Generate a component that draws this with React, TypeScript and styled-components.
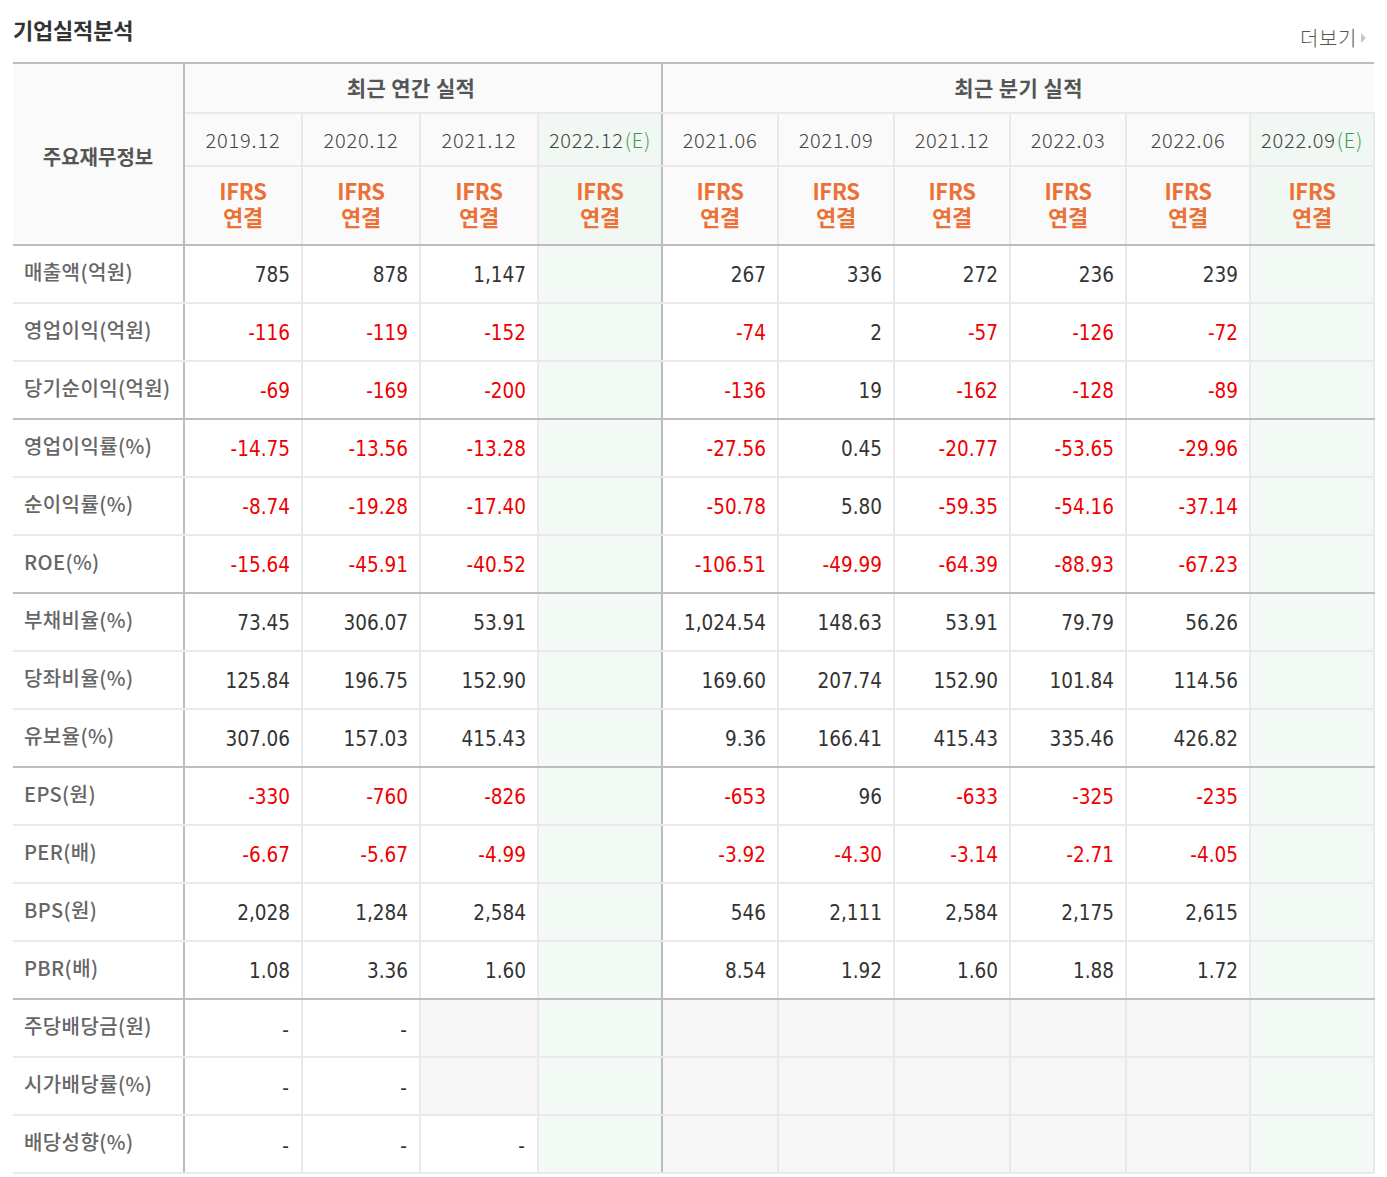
import React from 'react';
import styled, { createGlobalStyle } from 'styled-components';

const GlobalStyle = createGlobalStyle`
	html, body {
		margin: 0;
		padding: 0;
		background: #fff;
	}
	body {
		font-family: 'Noto Sans CJK KR', 'Noto Sans', sans-serif;
	}
`;

const LINE = '#e9e9e9';
const STRONG = '#bdbdbd';

type Cell = string | null | 'na';

interface Row {
	label: string;
	values: Cell[];
	groupEnd?: boolean;
}

// columns 3 and 9 are the estimate columns, they stay empty
const rows: Row[] = [
	{ label: '매출액(억원)', values: ['785', '878', '1,147', null, '267', '336', '272', '236', '239', null] },
	{ label: '영업이익(억원)', values: ['-116', '-119', '-152', null, '-74', '2', '-57', '-126', '-72', null] },
	{ label: '당기순이익(억원)', values: ['-69', '-169', '-200', null, '-136', '19', '-162', '-128', '-89', null], groupEnd: true },
	{ label: '영업이익률(%)', values: ['-14.75', '-13.56', '-13.28', null, '-27.56', '0.45', '-20.77', '-53.65', '-29.96', null] },
	{ label: '순이익률(%)', values: ['-8.74', '-19.28', '-17.40', null, '-50.78', '5.80', '-59.35', '-54.16', '-37.14', null] },
	{ label: 'ROE(%)', values: ['-15.64', '-45.91', '-40.52', null, '-106.51', '-49.99', '-64.39', '-88.93', '-67.23', null], groupEnd: true },
	{ label: '부채비율(%)', values: ['73.45', '306.07', '53.91', null, '1,024.54', '148.63', '53.91', '79.79', '56.26', null] },
	{ label: '당좌비율(%)', values: ['125.84', '196.75', '152.90', null, '169.60', '207.74', '152.90', '101.84', '114.56', null] },
	{ label: '유보율(%)', values: ['307.06', '157.03', '415.43', null, '9.36', '166.41', '415.43', '335.46', '426.82', null], groupEnd: true },
	{ label: 'EPS(원)', values: ['-330', '-760', '-826', null, '-653', '96', '-633', '-325', '-235', null] },
	{ label: 'PER(배)', values: ['-6.67', '-5.67', '-4.99', null, '-3.92', '-4.30', '-3.14', '-2.71', '-4.05', null] },
	{ label: 'BPS(원)', values: ['2,028', '1,284', '2,584', null, '546', '2,111', '2,584', '2,175', '2,615', null] },
	{ label: 'PBR(배)', values: ['1.08', '3.36', '1.60', null, '8.54', '1.92', '1.60', '1.88', '1.72', null], groupEnd: true },
	{ label: '주당배당금(원)', values: ['-', '-', 'na', null, 'na', 'na', 'na', 'na', 'na', null] },
	{ label: '시가배당률(%)', values: ['-', '-', 'na', null, 'na', 'na', 'na', 'na', 'na', null] },
	{ label: '배당성향(%)', values: ['-', '-', '-', null, 'na', 'na', 'na', 'na', 'na', null] },
];

const periods = [
	{ date: '2019.12' },
	{ date: '2020.12' },
	{ date: '2021.12' },
	{ date: '2022.12', estimate: true },
	{ date: '2021.06' },
	{ date: '2021.09' },
	{ date: '2021.12' },
	{ date: '2022.03' },
	{ date: '2022.06' },
	{ date: '2022.09', estimate: true },
];

const colWidths = [171, 118, 118, 118, 124, 116, 116, 116, 116, 124, 124];

export default function App() {
	return (
		<>
			<GlobalStyle />
			<Section>
				<TitleBar>
					<Title>기업실적분석</Title>
					<MoreLink>
						더보기
						<MoreArrow />
					</MoreLink>
				</TitleBar>
				<Table>
					<colgroup>
						{colWidths.map((w, i) => (
							<col key={i} style={{ width: w }} />
						))}
					</colgroup>
					<thead>
						<tr>
							<CornerTh rowSpan={3}>주요재무정보</CornerTh>
							<GroupTh colSpan={4} $divider>
								최근 연간 실적
							</GroupTh>
							<GroupTh colSpan={6}>최근 분기 실적</GroupTh>
						</tr>
						<tr>
							{periods.map((p, i) => (
								<DateTh key={i} $estimate={p.estimate} $divider={i === 3}>
									{p.date}
									{p.estimate && <Estimate>(E)</Estimate>}
								</DateTh>
							))}
						</tr>
						<tr>
							{periods.map((p, i) => (
								<BasisTh key={i} $estimate={p.estimate} $divider={i === 3}>
									<BasisLine>IFRS</BasisLine>
									<BasisLine>연결</BasisLine>
								</BasisTh>
							))}
						</tr>
					</thead>
					<tbody>
						{rows.map((row) => (
							<tr key={row.label}>
								<LabelTd $groupEnd={row.groupEnd}>{row.label}</LabelTd>
								{row.values.map((v, i) => (
									<ValueTd
										key={i}
										$groupEnd={row.groupEnd}
										$estimate={periods[i].estimate}
										$na={v === 'na'}
										$negative={!!v && v !== 'na' && v !== '-' && v.startsWith('-')}
										$dash={v === '-'}
										$divider={i === 3}
									>
										{v && v !== 'na' ? v : ''}
									</ValueTd>
								))}
							</tr>
						))}
					</tbody>
				</Table>
			</Section>
		</>
	);
}

const Section = styled.div`
	padding: 0 13px;
	width: 1361px;
`;

const TitleBar = styled.div`
	display: flex;
	justify-content: space-between;
	align-items: flex-end;
	height: 62px;
	box-sizing: border-box;
	padding-bottom: 10px;
`;

const Title = styled.h2`
	margin: 0 0 7px 0;
	font-size: 22px;
	font-weight: 700;
	letter-spacing: -0.2px;
	color: #333;
`;

const MoreLink = styled.a`
	display: flex;
	align-items: center;
	font-size: 20px;
	font-weight: 300;
	letter-spacing: 0.6px;
	color: #555;
	margin-right: 8px;
	cursor: pointer;
`;

const MoreArrow = styled.span`
	display: inline-block;
	margin-left: 4px;
	width: 0;
	height: 0;
	border-top: 5px solid transparent;
	border-bottom: 5px solid transparent;
	border-left: 5px solid #c8c8c8;
`;

const Table = styled.table`
	width: 1361px;
	table-layout: fixed;
	border-collapse: collapse;
	border-top: 2px solid ${STRONG};
	border-bottom: 2px solid ${STRONG};
`;

const HeadCell = styled.th<{ $estimate?: boolean; $divider?: boolean }>`
	padding: 0;
	text-align: center;
	border-bottom: 2px solid ${LINE};
	border-left: 2px solid ${LINE};
	border-right: 2px solid ${({ $divider }) => ($divider ? STRONG : LINE)};
	background: ${({ $estimate }) => ($estimate ? '#f1f7f2' : '#fafafa')};
	white-space: nowrap;
`;

const CornerTh = styled(HeadCell)`
	border-left: none;
	border-right: 2px solid ${STRONG};
	border-bottom: 2px solid ${STRONG};
	font-size: 20px;
	font-weight: 700;
	letter-spacing: 0;
	color: #555;
	padding-top: 4px;
`;

const GroupTh = styled(HeadCell)`
	height: 45px;
	padding: 0 ${({ $divider }) => ($divider ? '24px' : '0')} 3px 0;
	font-size: 21px;
	font-weight: 700;
	letter-spacing: 0.4px;
	color: #555;
	border-right: ${({ $divider }) => ($divider ? `2px solid ${STRONG}` : 'none')};
`;

const DateTh = styled(HeadCell)`
	height: 51px;
	font-size: 20px;
	font-weight: 300;
	color: #444;
	letter-spacing: 0.8px;
`;

const Estimate = styled.span`
	color: #3d9a5a;
	margin-left: 1px;
`;

const BasisTh = styled(HeadCell)`
	height: 71px;
	padding-bottom: 6px;
	border-bottom: 2px solid ${STRONG};
	font-size: 22px;
	font-weight: 700;
	letter-spacing: -0.3px;
	color: #ec7136;
`;

const BasisLine = styled.div`
	height: 26px;
	line-height: 26px;
`;

const LabelTd = styled.td<{ $groupEnd?: boolean }>`
	height: 50px;
	padding: 0 0 6px 11px;
	border-right: 2px solid ${STRONG};
	border-bottom: 2px solid ${({ $groupEnd }) => ($groupEnd ? STRONG : LINE)};
	font-size: 20px;
	font-weight: 500;
	letter-spacing: 0.4px;
	color: #666;
	white-space: nowrap;
	background: #fff;
`;

const ValueTd = styled.td<{
	$groupEnd?: boolean;
	$estimate?: boolean;
	$na?: boolean;
	$negative?: boolean;
	$dash?: boolean;
	$divider?: boolean;
}>`
	height: ${({ $dash }) => ($dash ? '52px' : '54px')};
	padding: ${({ $dash }) => ($dash ? '4px 12px 0 0' : '2px 11px 0 0')};
	text-align: right;
	border-bottom: 2px solid ${({ $groupEnd }) => ($groupEnd ? STRONG : LINE)};
	border-right: 2px solid ${({ $divider }) => ($divider ? STRONG : LINE)};
	background: ${({ $estimate, $na }) => ($estimate ? '#f3f9f5' : $na ? '#f6f6f6' : '#fff')};
	font-family: 'DejaVu Sans Condensed', 'DejaVu Sans', sans-serif;
	font-size: 20.5px;
	color: ${({ $negative }) => ($negative ? '#ee0000' : '#333')};
	white-space: nowrap;
`;
